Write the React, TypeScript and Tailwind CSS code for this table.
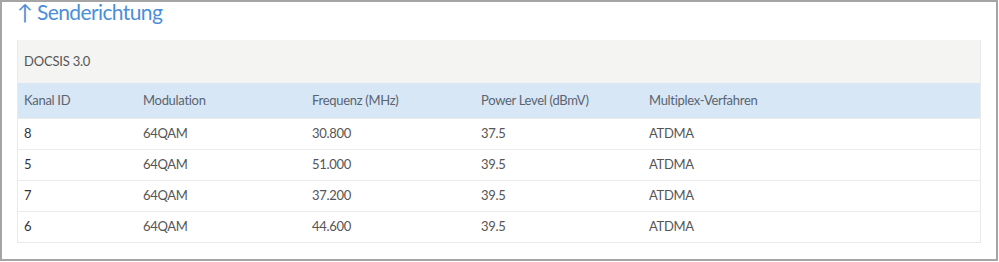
import React from 'react';

interface Channel {
  id: string;
  modulation: string;
  frequency: string;
  power: string;
  multiplex: string;
}

const channels: Channel[] = [
  { id: '8', modulation: '64QAM', frequency: '30.800', power: '37.5', multiplex: 'ATDMA' },
  { id: '5', modulation: '64QAM', frequency: '51.000', power: '39.5', multiplex: 'ATDMA' },
  { id: '7', modulation: '64QAM', frequency: '37.200', power: '39.5', multiplex: 'ATDMA' },
  { id: '6', modulation: '64QAM', frequency: '44.600', power: '39.5', multiplex: 'ATDMA' },
];

const columns = ['Kanal ID', 'Modulation', 'Frequenz (MHz)', 'Power Level (dBmV)', 'Multiplex-Verfahren'];

const App: React.FC = () => {
  return (
    <div className="w-[998px] h-[261px] border-2 border-[#a5a5a5] bg-white font-['Lato','Noto_Sans',sans-serif] overflow-hidden">
      {/* Section title */}
      <h2 className="ml-[15px] mt-[-4px] text-[21px] leading-[28px] tracking-[-0.6px] text-[#4a8fd8] font-normal">
        ↑ Senderichtung
      </h2>

      {/* Channel table */}
      <div className="ml-[15px] mt-[14px] w-[964px] border border-[#e9e9e9] border-t-0">
        <div className="h-[43px] bg-[#f4f4f2] flex items-center px-[6px] text-[13px] tracking-[-0.2px] text-[#555]">
          DOCSIS 3.0
        </div>
        <table className="w-full table-fixed border-collapse text-[13px] tracking-[-0.3px]">
          <colgroup>
            <col className="w-[119px]" />
            <col className="w-[169px]" />
            <col className="w-[169px]" />
            <col className="w-[168px]" />
            <col />
          </colgroup>
          <thead>
            <tr className="h-[35px] bg-[#d7e7f6] text-[#5a6470]">
              {columns.map((c) => (
                <th key={c} className="text-left font-normal px-[6px]">
                  {c}
                </th>
              ))}
            </tr>
          </thead>
          <tbody>
            {channels.map((ch) => (
              <tr key={ch.id} className="h-[31px] text-[#555] border-t border-[#ececec]">
                <td className="px-[6px] text-[#333]">{ch.id}</td>
                <td className="px-[6px]">{ch.modulation}</td>
                <td className="px-[6px]">{ch.frequency}</td>
                <td className="px-[6px]">{ch.power}</td>
                <td className="px-[6px]">{ch.multiplex}</td>
              </tr>
            ))}
          </tbody>
        </table>
      </div>
    </div>
  );
};

export default App;
